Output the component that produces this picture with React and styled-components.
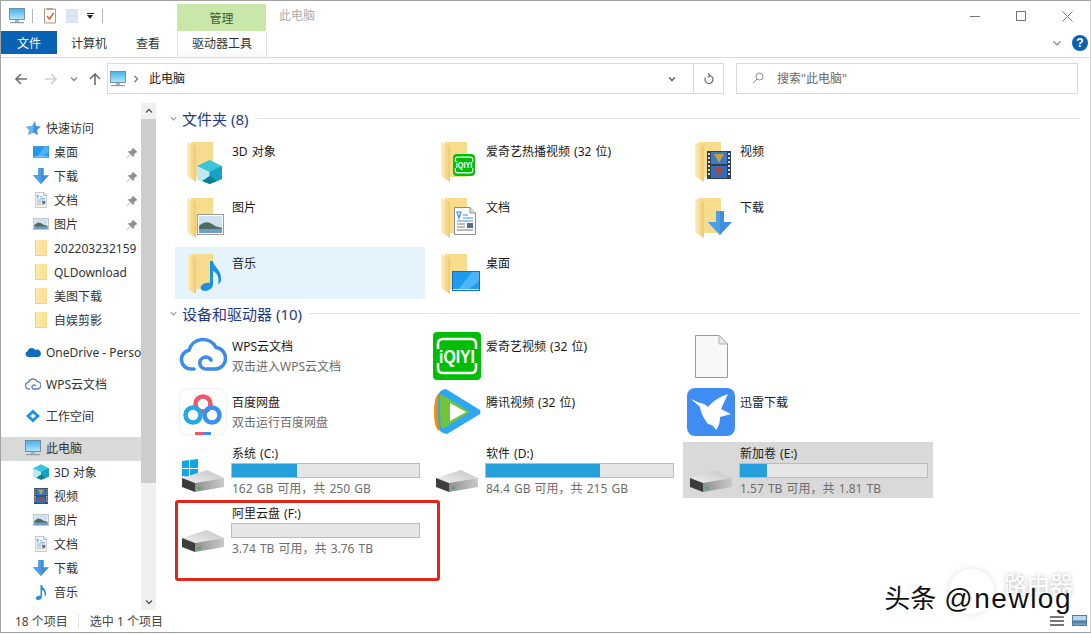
import React from "react";
import styled, { createGlobalStyle } from "styled-components";

const Global = createGlobalStyle`
  html, body {
    margin: 0;
    background: #fff;
    overflow: hidden;
  }
  * {
    box-sizing: border-box;
  }
`;

const Monitor = (props) => (
  <svg viewBox="0 0 16 16" {...props}>
    <defs>
      <linearGradient id="scr" x1="0" y1="0" x2="0" y2="1">
        <stop offset="0" stopColor="#3fb2ec" />
        <stop offset="1" stopColor="#b5e6fb" />
      </linearGradient>
    </defs>
    <rect x="0.5" y="0.5" width="15" height="11" fill="url(#scr)" stroke="#5c7f96" strokeWidth="0.8" />
    <rect x="6" y="12" width="4" height="2" fill="#a9b4bb" />
    <rect x="1" y="14" width="14" height="1.2" fill="#8e9aa3" />
  </svg>
);

const Desktop = (props) => (
  <svg viewBox="0 0 28 20" {...props}>
    <rect x="0.5" y="0.5" width="27" height="19" fill="#1e9bf0" stroke="#1470b8" />
    <path d="M6 19 L20 1 H27 V10 L16 19Z" fill="#4db4f7" />
    <rect x="1" y="18" width="26" height="1" fill="#cfeaff" />
  </svg>
);

const Down = (props) => (
  <svg viewBox="0 0 24 24" {...props}>
    <path d="M8 0H16V11H24L12 24L0 11H8Z" fill="#3b8fdc" />
    <path d="M8 0H12V24L0 11H8Z" fill="#4f9fe6" />
  </svg>
);

const Doc = (props) => (
  <svg viewBox="0 0 22 28" {...props}>
    <path d="M0.5 0.5H16L21.5 6V27.5H0.5Z" fill="#fff" stroke="#8c8c8c" />
    <path d="M16 0.5V6H21.5" fill="#e4e4e4" stroke="#8c8c8c" />
    <path d="M3 5H7L5 11ZM9 8H14M9 11H19M3 14H19" stroke="#3f8fdc" strokeWidth="1.2" fill="none" />
    <path d="M3 17H11M3 20H11M3 23H19" stroke="#7b7b7b" strokeWidth="1" />
    <rect x="13" y="16" width="6" height="5" fill="#59707c" />
  </svg>
);

const Picture = (props) => (
  <svg viewBox="0 0 27 21" {...props}>
    <rect x="0.5" y="0.5" width="26" height="20" fill="#fff" stroke="#9a9a9a" />
    <rect x="2" y="2" width="23" height="17" fill="#cfe0ee" />
    <path d="M2 12C8 6 13 8 18 12L25 14V19H2Z" fill="#4d6c62" />
    <rect x="2" y="15" width="23" height="4" fill="#6f9ecb" />
  </svg>
);

const Note = (props) => (
  <svg viewBox="0 0 22 32" {...props}>
    <path d="M10 2H13C14 9 22 10 21 22C20 24 19 25 18 25C20 18 16 13 13 12V25C13 29 9 32 5 32C1 32 0 29 1 27C3 24 7 23 10 24Z" fill="#1b92e0" />
  </svg>
);

const Cube = (props) => (
  <svg viewBox="0 0 25 24" {...props}>
    <path d="M12.5 0L25 6V19L12.5 24L0 19V6Z" fill="#3cc4dd" />
    <path d="M0 6L12.5 12V24L0 19Z" fill="#bfeaf3" />
    <path d="M12.5 12L25 6V19L12.5 24Z" fill="#17a2c2" />
    <path d="M5 21L12.5 16L20 21L12.5 24Z" fill="#0b7f9c" />
  </svg>
);

const Film = (props) => (
  <svg viewBox="0 0 24 28" {...props}>
    <rect width="24" height="28" fill="#33404a" />
    <rect x="4" y="1" width="16" height="12" fill="#3d79c9" />
    <rect x="4" y="15" width="16" height="12" fill="#2f6dc0" />
    <path d="M7 3H17L14 8L12 12L10 8Z" fill="#c9a13a" />
    <path d="M8 17H16L14 22L12 26L10 22Z" fill="#a8473b" />
    <path d="M1 3H3M1 7H3M1 11H3M1 15H3M1 19H3M1 23H3M21 3H23M21 7H23M21 11H23M21 15H23M21 19H23M21 23H23" stroke="#d8d8d8" strokeWidth="2" />
  </svg>
);

const Iqiyi = ({ small, ...props }) => (
  <svg viewBox="0 0 48 48" {...props}>
    <rect width="48" height="48" rx={small ? 8 : 4} fill="#00be06" />
    <path d="M5 17V12Q5 7 10 7H38Q43 7 43 12V17M5 31V36Q5 41 10 41H38Q43 41 43 36V31" stroke="#fff" strokeWidth="2.6" fill="none" />
    <text x="24" y="31" fontFamily="Liberation Sans, sans-serif" fontWeight="700" fontSize="18" fill="#fff" textAnchor="middle" textLength="36" lengthAdjust="spacingAndGlyphs">iQIYI</text>
  </svg>
);

const Folder = ({ children }) => (
  <svg width="48" height="48" viewBox="0 0 48 48">
    <defs>
      <linearGradient id="flap" x1="0" y1="0" x2="1" y2="0">
        <stop offset="0" stopColor="#fdf0c4" />
        <stop offset="1" stopColor="#f0c868" />
      </linearGradient>
    </defs>
    <rect x="12" y="5" width="22" height="35" fill="#f8dc8e" />
    <path d="M8 5L17 9V45L8 39Z" fill="url(#flap)" />
    {children}
  </svg>
);

const Drive = ({ children }) => (
  <svg width="48" height="48" viewBox="0 0 48 48">
    <defs>
      <linearGradient id="hdTop" x1="0" y1="1" x2="1" y2="0">
        <stop offset="0" stopColor="#f0f0f0" />
        <stop offset="1" stopColor="#c4c4c4" />
      </linearGradient>
      <linearGradient id="hdSide" x1="0" y1="0" x2="1" y2="0">
        <stop offset="0" stopColor="#8f8f8f" />
        <stop offset="1" stopColor="#c9c9c9" />
      </linearGradient>
    </defs>
    {children}
    <path d="M3 32L28 24L45 32L16 37Z" fill="url(#hdTop)" />
    <path d="M3 32L16 37V46L3 41Z" fill="#3d3d3d" />
    <path d="M16 37L45 32V41L16 46Z" fill="url(#hdSide)" />
    <rect x="19" y="41" width="3" height="2" fill="#37b24d" />
  </svg>
);

const WpsCloud = () => (
  <svg width="48" height="48" viewBox="0 0 48 48">
    <path d="M15 37H12A9.5 9.5 0 0 1 10 18.2A14.5 14.5 0 0 1 37 15.5A10.8 10.8 0 0 1 36.5 37H27A6 6 0 1 1 32 28" fill="none" stroke="#3d8bea" strokeWidth="3.6" strokeLinecap="round" />
  </svg>
);

const Baidu = () => (
  <svg width="48" height="48" viewBox="0 0 48 48">
    <rect x="0.5" y="0.5" width="47" height="47" rx="9" fill="#fff" stroke="#f0f0f0" />
    <circle cx="24" cy="16" r="7.5" fill="none" stroke="#f0566a" strokeWidth="4.5" />
    <circle cx="14" cy="27" r="7.5" fill="none" stroke="#23a9ea" strokeWidth="4.5" />
    <circle cx="33" cy="27" r="7.5" fill="none" stroke="#3a8ff0" strokeWidth="4.5" />
    <rect x="16" y="44" width="8" height="3" fill="#f0566a" />
    <rect x="24" y="44" width="8" height="3" fill="#3a8ff0" />
  </svg>
);

const TencentVideo = () => (
  <svg width="48" height="48" viewBox="0 0 48 48">
    <path d="M6 5Q1 8 1 24Q1 40 6 43L24 24Z" fill="#f7890c" />
    <path d="M13 1Q9 1 6 5Q3 24 7 43Q10 46 14 46L47 26Q48 24 47 22Z" fill="#2da7f2" />
    <path d="M7 8Q6 24 8 39Q9 41 11 40L37 24L11 8Q8 6 7 8Z" fill="#71c53b" />
    <path d="M17 15L33 24L17 33Z" fill="#fff" />
  </svg>
);

const Xunlei = () => (
  <svg width="48" height="48" viewBox="0 0 48 48">
    <rect width="48" height="48" rx="8" fill="#3f8cf3" />
    <path d="M4 11L13 15C16 15 19 17 21 19C25 14 32 9 41 6C38 12 36 17 34 21L44 26L33 29C33 34 32 38 29 42C27 38 24 36 21 36C18 32 14 26 13 19Z" fill="#fff" />
  </svg>
);

const BlankFile = () => (
  <svg width="48" height="48" viewBox="0 0 48 48">
    <path d="M8.5 3.5H32L40.5 12V45.5H8.5Z" fill="#f8f8f8" stroke="#9a9a9a" />
    <path d="M32 3.5V12H40.5Z" fill="#e8e8e8" stroke="#b5b5b5" />
  </svg>
);

const WinLogo = () => (
  <g fill="#12a5e8">
    <path d="M3 15L10 14V22H3Z" />
    <path d="M11 14L19 13V22H11Z" />
    <path d="M3 23H10V31L3 30Z" />
    <path d="M11 23H19V32L11 31Z" />
  </g>
);

const Star = () => (
  <svg width="16" height="16" viewBox="0 0 16 16">
    <path d="M10 1L11 6L16 6.500L12 10L13 15L8 12.500L3 15L4.500 10L1 7L7 6Z" fill="#3f8fdc" />
    <path d="M10 1L8 12.500L3 15L4.500 10L1 7L7 6Z" fill="#66b2ee" />
  </svg>
);

const OneDrive = () => (
  <svg width="16" height="16" viewBox="0 0 16 16">
    <path d="M3 13A3 3 0 0 1 2.500 7.200A4.500 4.500 0 0 1 10.500 6A3.500 3.500 0 0 1 13.500 13Z" fill="#0f6cbd" />
  </svg>
);

const WpsSmall = () => (
  <svg width="16" height="16" viewBox="0 0 16 16">
    <path d="M5 13H4A3.300 3.300 0 0 1 3.500 6.400A4.800 4.800 0 0 1 12.300 5.500A3.700 3.700 0 0 1 12 13H9A2 2 0 1 1 10.700 10" fill="none" stroke="#5d80c6" strokeWidth="1.400" />
  </svg>
);

const Workspace = () => (
  <svg width="16" height="16" viewBox="0 0 16 16">
    <path d="M8 1.500L15 8L8 14.500L1 8Z" fill="#1c93dd" />
    <path d="M8 5.500L11 8L8 10.500L5 8Z" fill="#fff" />
  </svg>
);

const Pin = () => (
  <svg width="12" height="12" viewBox="0 0 12 12">
    <path d="M7 1L11 5L9.500 5.500L7.500 8L7.500 10L2 4.500L4 4.500L6.500 2.500ZM4 7.500L1 11" fill="#8c8f94" stroke="#8c8f94" strokeWidth="0.600" />
  </svg>
);

const Chevron = ({ dir = "down", size = 10, color = "#7a7a7a" }) => {
  const paths = {
    down: "M2 3.500L5 6.500L8 3.500",
    up: "M2 6.500L5 3.500L8 6.500",
    right: "M3.500 2L6.500 5L3.500 8",
  };
  return (
    <svg width={size} height={size} viewBox="0 0 10 10">
      <path d={paths[dir]} fill="none" stroke={color} strokeWidth="1.300" />
    </svg>
  );
};

const Arrow = ({ color, rotate = 0 }) => (
  <svg width="14" height="14" viewBox="0 0 14 14" style={{ transform: `rotate(${rotate}deg)` }}>
    <path d="M13 7H2M7 2L2 7L7 12" fill="none" stroke={color} strokeWidth="1.600" />
  </svg>
);

const Window = styled.div`
  width: 1091px;
  height: 633px;
  display: flex;
  flex-direction: column;
  border-top: 1px solid #a3a3a3;
  border-left: 1px solid #a3a3a3;
  border-right: 1px solid #cfcfcf;
  border-bottom: 1px solid #9c9c9c;
  font-family: "Noto Sans", "Noto Sans CJK SC", sans-serif;
  font-size: 12px;
  color: #222;
  position: relative;
  overflow: hidden;
`;

const TitleBar = styled.div`
  height: 30px;
  display: flex;
  flex: none;
`;

const QuickBar = styled.div`
  width: 176px;
  display: flex;
  align-items: center;
  padding: 0 0 0 8px;
`;

const QuickSep = styled.div`
  width: 1px;
  height: 14px;
  margin: 0 10px 0 7px;
  background: #b5b5b5;
`;

const QuickDoc = styled.svg`
  width: 14px;
  height: 16px;
  margin-right: 8px;
`;

const Caret = styled.div`
  width: 10px;
  margin-left: -2px;
  display: flex;
  flex-direction: column;
  align-items: center;
  gap: 1px;

  &::before {
    content: "";
    width: 7px;
    height: 1px;
    background: #222;
  }

  &::after {
    content: "";
    border-left: 3.500px solid transparent;
    border-right: 3.500px solid transparent;
    border-top: 4px solid #222;
  }
`;

const ManageTab = styled.div`
  width: 89px;
  height: 27px;
  margin-top: 3px;
  background: #c8e7a8;
  color: #3c5a34;
  display: flex;
  align-items: center;
  justify-content: center;
`;

const WindowTitle = styled.div`
  margin-left: 13px;
  line-height: 30px;
  color: #ababab;
`;

const WindowControls = styled.div`
  margin-left: auto;
  display: flex;
`;

const ControlButton = styled.div`
  width: 46px;
  height: 30px;
  display: flex;
  align-items: center;
  justify-content: center;
`;

const RibbonTabs = styled.div`
  height: 27px;
  flex: none;
  display: flex;
  align-items: stretch;
  border-bottom: 1px solid #dadada;
`;

const FileTab = styled.div`
  width: 56px;
  height: 23px;
  background: #0a62b4;
  color: #fff;
  display: flex;
  align-items: center;
  justify-content: center;
`;

const RibbonTab = styled.div`
  padding: 0 14px;
  margin-left: ${(p) => p.$gap || 0}px;
  margin-bottom: 3px;
  display: flex;
  align-items: center;
  color: #333;
`;

const ToolTab = styled.div`
  width: 90px;
  margin-left: 3px;
  background: linear-gradient(#fff 60%, #fafafa);
  border-left: 1px solid #e2e2e2;
  border-right: 1px solid #e2e2e2;
  padding-bottom: 3px;
  display: flex;
  align-items: center;
  justify-content: center;
  color: #333;
`;

const RibbonHelp = styled.div`
  margin-left: auto;
  padding-right: 2px;
  display: flex;
  align-items: center;
  gap: 9px;
  padding-bottom: 2px;
`;

const HelpBadge = styled.div`
  width: 16px;
  height: 16px;
  border-radius: 50%;
  background: #0a62b4;
  color: #fff;
  font-family: "Liberation Sans", sans-serif;
  font-weight: 700;
  font-size: 12px;
  line-height: 16px;
  text-align: center;
`;

const AddressRow = styled.div`
  height: 38px;
  flex: none;
  display: flex;
  align-items: flex-start;
  padding: 5px 0 0 13px;
`;

const NavButton = styled.div`
  height: 31px;
  margin-right: ${(p) => p.$gap}px;
  display: flex;
  align-items: center;
`;

const AddressBox = styled.div`
  width: 617px;
  height: 31px;
  display: flex;
  align-items: center;
  padding-left: 2px;
  border: 1px solid #d9d9d9;
`;

const AddressChevron = styled.span`
  margin-left: 5px;
  display: flex;
`;

const Crumb = styled.span`
  flex: 1;
  margin-left: 8px;
  padding-bottom: 2px;
  color: #222;
`;

const RefreshCell = styled.div`
  width: 30px;
  height: 29px;
  margin-left: 16px;
  border-left: 1px solid #d9d9d9;
  display: flex;
  align-items: center;
  justify-content: center;
`;

const SearchBox = styled.div`
  width: 342px;
  height: 31px;
  margin-left: 12px;
  padding: 0 0 2px 15px;
  display: flex;
  align-items: center;
  gap: 13px;
  border: 1px solid #d9d9d9;
  color: #6a6a6a;
`;

const Body = styled.div`
  flex: 1;
  min-height: 0;
  display: flex;
`;

const Sidebar = styled.div`
  width: 140px;
  flex: none;
  padding-top: 21px;
  overflow: hidden;
`;

const NavRow = styled.div`
  height: 24px;
  margin-top: ${(p) => p.$gap || 0}px;
  padding-left: ${(p) => (p.$sub ? 32 : 24)}px;
  padding-bottom: 2px;
  background: ${(p) => (p.$active ? "#d9d9d9" : "transparent")};
  display: flex;
  align-items: center;
  gap: 5px;
  white-space: nowrap;
  color: #333;
  position: relative;
`;

const NavIcon = styled.span`
  width: 16px;
  height: 16px;
  flex: none;
  display: flex;
  align-items: center;
  justify-content: center;

  svg {
    display: block;
    max-width: 16px;
    max-height: 16px;
  }
`;

const PinSlot = styled.span`
  position: absolute;
  left: 125px;
  top: 6px;
  line-height: 0;
`;

const TreeFolder = styled.span`
  width: 12px;
  height: 16px;
  margin-left: 2px;
  margin-right: 2px;
  background: linear-gradient(90deg, #fde9ae, #fcdf8e);
  border-left: 1px solid #ecd083;
  border-bottom: 1px solid #ecd48d;
`;

const ScrollBar = styled.div`
  width: 15px;
  height: 507px;
  margin-top: 7px;
  background: #f0f0f0;
  display: flex;
  flex-direction: column;
  flex: none;
`;

const ScrollArrow = styled.div`
  height: 16px;
  flex: none;
  display: flex;
  align-items: center;
  justify-content: center;
`;

const ScrollThumb = styled.div`
  height: 364px;
  background: #cdcdcd;
`;

const ScrollTrack = styled.div`
  flex: 1;
`;

const Content = styled.div`
  flex: 1;
  min-width: 0;
  padding: 11px 0 0 19px;
  position: relative;
`;

const GroupHeader = styled.div`
  height: 22px;
  margin: ${(p) => (p.$first ? "0" : "3px")} 10px 6px -6px;
  display: flex;
  align-items: center;
  color: #1e3a8a;
  font-size: 15px;
  gap: 4px;

  &::after {
    content: "";
    flex: 1;
    height: 1px;
    margin-left: 3px;
    background: #e2e2e2;
  }
`;

const TileGrid = styled.div`
  display: grid;
  grid-template-columns: repeat(3, 250px);
  gap: 4px;
  word-spacing: 1px;
`;

const Tile = styled.div`
  height: ${(p) => (p.$drive ? 56 : 52)}px;
  padding-left: 4px;
  display: flex;
  align-items: center;
  gap: 5px;
  background: ${(p) => p.$bg || "transparent"};
`;

const TileText = styled.div`
  align-self: flex-start;
  flex: 1;
  min-width: 0;
  padding-top: ${(p) => (p.$drive ? 4 : 9)}px;
`;

const TileName = styled.div`
  line-height: 16px;
  color: #1a1a1a;
  white-space: nowrap;
`;

const TileNote = styled.div`
  line-height: 16px;
  margin-top: 4px;
  color: #6d6d6d;
  white-space: nowrap;
`;

const UsageBar = styled.div`
  width: 189px;
  height: 15px;
  margin: 1px 0 0 -1px;
  background: #e6e6e6;
  border: 1px solid #bcbcbc;
`;

const UsageFill = styled.div`
  height: 100%;
  background: #26a0da;
`;

const FreeNote = styled(TileNote)`
  margin-top: 3px;
`;

const HighlightBox = styled.div`
  position: absolute;
  left: 19px;
  top: 404px;
  width: 265px;
  height: 81px;
  border: 3px solid #e1251b;
  border-radius: 3px;
  pointer-events: none;
`;

const StatusBar = styled.div`
  height: 23px;
  flex: none;
  display: flex;
  align-items: center;
  padding-left: 14px;
  color: #444;
  position: relative;
`;

const StatusSep = styled.span`
  width: 1px;
  height: 14px;
  margin: 0 11px 0 10px;
  background: #e0e0e0;
`;

const ViewSwitch = styled.div`
  margin-left: auto;
  margin-right: 3px;
  display: flex;
  align-items: center;
  gap: 8px;
`;

const DetailsIcon = styled.span`
  width: 14px;
  height: 10px;
  background: repeating-linear-gradient(#777 0 2px, #fff 2px 4px);
`;

const LargeIcon = styled.span`
  width: 15px;
  height: 11px;
  background: linear-gradient(#bcd6ea 45%, #4e7087 55%, #7aa6cc);
  border: 1px solid #3c7fb8;
`;

const Watermark = styled.div`
  position: absolute;
  right: 18px;
  bottom: 17px;
  display: flex;
  align-items: baseline;
  gap: 8px;
  line-height: 32px;
  color: #111;
  white-space: nowrap;
  text-shadow: 1px 2px 2px rgba(255, 255, 255, 0.9);
`;

const WatermarkCn = styled.span`
  font-family: "Noto Sans CJK SC", sans-serif;
  font-size: 26px;
`;

const WatermarkEn = styled.span`
  font-family: "Liberation Sans", sans-serif;
  font-size: 28px;
  letter-spacing: 1.500px;
`;

const WatermarkBrand = styled.div`
  position: absolute;
  right: 17px;
  bottom: 18px;
  display: flex;
  align-items: flex-start;
  gap: 10px;
  font-family: "Noto Sans CJK SC", sans-serif;
  font-size: 23px;
  line-height: 28px;
  color: #fff;
  text-shadow: 0 0 4px rgba(0, 0, 0, 0.3);
`;

const WatermarkDisc = styled.span`
  width: 45px;
  height: 45px;
  border-radius: 50%;
  background: #fff;
  box-shadow: 0 0 8px rgba(0, 0, 0, 0.12);
`;

const quickAccess = [
  { name: "桌面", icon: <Desktop width="16" height="12" />, pin: true },
  { name: "下载", icon: <Down width="16" height="16" />, pin: true },
  { name: "文档", icon: <Doc width="12" height="16" />, pin: true },
  { name: "图片", icon: <Picture width="16" height="12" />, pin: true },
  { name: "202203232159", icon: <TreeFolder /> },
  { name: "QLDownload", icon: <TreeFolder /> },
  { name: "美图下载", icon: <TreeFolder /> },
  { name: "自娱剪影", icon: <TreeFolder /> },
];

const thisPc = [
  { name: "3D 对象", icon: <Cube width="16" height="16" /> },
  { name: "视频", icon: <Film width="14" height="16" /> },
  { name: "图片", icon: <Picture width="16" height="12" /> },
  { name: "文档", icon: <Doc width="12" height="16" /> },
  { name: "下载", icon: <Down width="16" height="16" /> },
  { name: "音乐", icon: <Note width="12" height="16" /> },
];

const folders = [
  { name: "3D 对象", overlay: <Cube x="18" y="23" width="25" height="24" /> },
  { name: "爱奇艺热播视频 (32 位)", overlay: <Iqiyi small x="20" y="17" width="22" height="22" /> },
  { name: "视频", overlay: <Film x="20" y="14" width="24" height="28" /> },
  { name: "图片", overlay: <Picture x="18" y="21" width="27" height="21" /> },
  { name: "文档", overlay: <Doc x="21" y="14" width="22" height="28" /> },
  { name: "下载", overlay: <Down x="21" y="18" width="24" height="24" /> },
  { name: "音乐", overlay: <Note x="21" y="10" width="22" height="32" />, selected: true },
  { name: "桌面", overlay: <Desktop x="19" y="22" width="28" height="20" /> },
];

const apps = [
  { name: "WPS云文档", note: "双击进入WPS云文档", icon: <WpsCloud /> },
  { name: "爱奇艺视频 (32 位)", icon: <Iqiyi width="48" height="48" /> },
  { name: "", icon: <BlankFile /> },
  { name: "百度网盘", note: "双击运行百度网盘", icon: <Baidu /> },
  { name: "腾讯视频 (32 位)", icon: <TencentVideo /> },
  { name: "迅雷下载", icon: <Xunlei /> },
];

const drives = [
  { name: "系统 (C:)", free: "162 GB 可用，共 250 GB", used: 35, system: true },
  { name: "软件 (D:)", free: "84.4 GB 可用，共 215 GB", used: 61 },
  { name: "新加卷 (E:)", free: "1.57 TB 可用，共 1.81 TB", used: 14.500, selected: true },
  { name: "阿里云盘 (F:)", free: "3.74 TB 可用，共 3.76 TB", used: 0 },
];

const App = () => {
  return (
    <Window>
      <Global />
      <TitleBar>
        <QuickBar>
          <Monitor width="16" height="16" />
          <QuickSep />
          <QuickDoc viewBox="0 0 14 16">
            <path d="M1.500 1H12.500V15H1.500Z" fill="#fbfbfb" stroke="#a89a8c" />
            <path d="M4 8L6.500 11L10.500 5" fill="none" stroke="#e2582c" strokeWidth="1.400" />
            <rect x="4" y="0" width="6" height="2" fill="#b9a28f" />
          </QuickDoc>
          <QuickDoc viewBox="0 0 14 16">
            <rect x="1" y="1" width="12" height="14" fill="#dbe5f3" />
          </QuickDoc>
          <Caret />
          <QuickSep />
        </QuickBar>
        <ManageTab>管理</ManageTab>
        <WindowTitle>此电脑</WindowTitle>
        <WindowControls>
          <ControlButton>
            <svg width="10" height="10" viewBox="0 0 10 10">
              <path d="M0 5.500H10" stroke="#777" />
            </svg>
          </ControlButton>
          <ControlButton>
            <svg width="10" height="10" viewBox="0 0 10 10">
              <rect x="0.500" y="0.500" width="9" height="9" fill="none" stroke="#777" />
            </svg>
          </ControlButton>
          <ControlButton>
            <svg width="11" height="11" viewBox="0 0 11 11">
              <path d="M0.500 0.500L10.500 10.500M10.500 0.500L0.500 10.500" stroke="#777" />
            </svg>
          </ControlButton>
        </WindowControls>
      </TitleBar>

      <RibbonTabs>
        <FileTab>文件</FileTab>
        <RibbonTab>计算机</RibbonTab>
        <RibbonTab $gap={1}>查看</RibbonTab>
        <ToolTab>驱动器工具</ToolTab>
        <RibbonHelp>
          <Chevron size={12} color="#9a9a9a" />
          <HelpBadge>?</HelpBadge>
        </RibbonHelp>
      </RibbonTabs>

      <AddressRow>
        <NavButton $gap={16}>
          <Arrow color="#6f6f6f" />
        </NavButton>
        <NavButton $gap={11}>
          <Arrow color="#cfcfcf" rotate={180} />
        </NavButton>
        <NavButton $gap={9}>
          <Chevron color="#8a8a8a" />
        </NavButton>
        <NavButton $gap={5}>
          <Arrow color="#6f6f6f" rotate={90} />
        </NavButton>
        <AddressBox>
          <Monitor width="16" height="16" />
          <AddressChevron>
            <Chevron dir="right" color="#777" />
          </AddressChevron>
          <Crumb>此电脑</Crumb>
          <Chevron color="#555" />
          <RefreshCell>
            <svg width="12" height="12" viewBox="0 0 12 12">
              <path d="M6 2.500A4 4 0 1 1 2.500 4.500M5 0.500L7 2.500L5 4.500" fill="none" stroke="#666" strokeWidth="1.200" />
            </svg>
          </RefreshCell>
        </AddressBox>
        <SearchBox>
          <svg width="12" height="12" viewBox="0 0 12 12">
            <circle cx="7.500" cy="4.500" r="3.500" fill="none" stroke="#8c8c8c" />
            <path d="M5 7L1 11" stroke="#8c8c8c" />
          </svg>
          <span>搜索"此电脑"</span>
        </SearchBox>
      </AddressRow>

      <Body>
        <Sidebar>
          <NavRow>
            <NavIcon>
              <Star />
            </NavIcon>
            快速访问
          </NavRow>
          {quickAccess.map((item) => (
            <NavRow $sub key={item.name}>
              <NavIcon>{item.icon}</NavIcon>
              {item.name}
              {item.pin && (
                <PinSlot>
                  <Pin />
                </PinSlot>
              )}
            </NavRow>
          ))}
          <NavRow $gap={8}>
            <NavIcon>
              <OneDrive />
            </NavIcon>
            OneDrive - Personal
          </NavRow>
          <NavRow $gap={8}>
            <NavIcon>
              <WpsSmall />
            </NavIcon>
            WPS云文档
          </NavRow>
          <NavRow $gap={8}>
            <NavIcon>
              <Workspace />
            </NavIcon>
            工作空间
          </NavRow>
          <NavRow $gap={8} $active>
            <NavIcon>
              <Monitor width="16" height="16" />
            </NavIcon>
            此电脑
          </NavRow>
          {thisPc.map((item) => (
            <NavRow $sub key={item.name}>
              <NavIcon>{item.icon}</NavIcon>
              {item.name}
            </NavRow>
          ))}
        </Sidebar>

        <ScrollBar>
          <ScrollArrow>
            <Chevron dir="up" color="#555" />
          </ScrollArrow>
          <ScrollThumb />
          <ScrollTrack />
          <ScrollArrow>
            <Chevron color="#555" />
          </ScrollArrow>
        </ScrollBar>

        <Content>
          <GroupHeader $first>
            <Chevron size={9} color="#9a9a9a" />
            文件夹 (8)
          </GroupHeader>
          <TileGrid>
            {folders.map((item) => (
              <Tile key={item.name} $bg={item.selected && "#e5f3fc"}>
                <Folder>{item.overlay}</Folder>
                <TileText>
                  <TileName>{item.name}</TileName>
                </TileText>
              </Tile>
            ))}
          </TileGrid>

          <GroupHeader>
            <Chevron size={9} color="#9a9a9a" />
            设备和驱动器 (10)
          </GroupHeader>
          <TileGrid>
            {apps.map((item, i) => (
              <Tile key={i}>
                {item.icon}
                <TileText>
                  <TileName>{item.name}</TileName>
                  {item.note && <TileNote>{item.note}</TileNote>}
                </TileText>
              </Tile>
            ))}
            {drives.map((item) => (
              <Tile $drive key={item.name} $bg={item.selected && "#d9d9d9"}>
                <Drive>{item.system && <WinLogo />}</Drive>
                <TileText $drive>
                  <TileName>{item.name}</TileName>
                  <UsageBar>
                    <UsageFill style={{ width: `${item.used}%` }} />
                  </UsageBar>
                  <FreeNote>{item.free}</FreeNote>
                </TileText>
              </Tile>
            ))}
          </TileGrid>
          <HighlightBox />
        </Content>
      </Body>

      <StatusBar>
        18 个项目
        <StatusSep />
        选中 1 个项目
        <ViewSwitch>
          <DetailsIcon />
          <LargeIcon />
        </ViewSwitch>
      </StatusBar>

      <WatermarkBrand>
        <WatermarkDisc />
        路由器
      </WatermarkBrand>
      <Watermark>
        <WatermarkCn>头条</WatermarkCn>
        <WatermarkEn>@newlog</WatermarkEn>
      </Watermark>
    </Window>
  );
};

export default App;
